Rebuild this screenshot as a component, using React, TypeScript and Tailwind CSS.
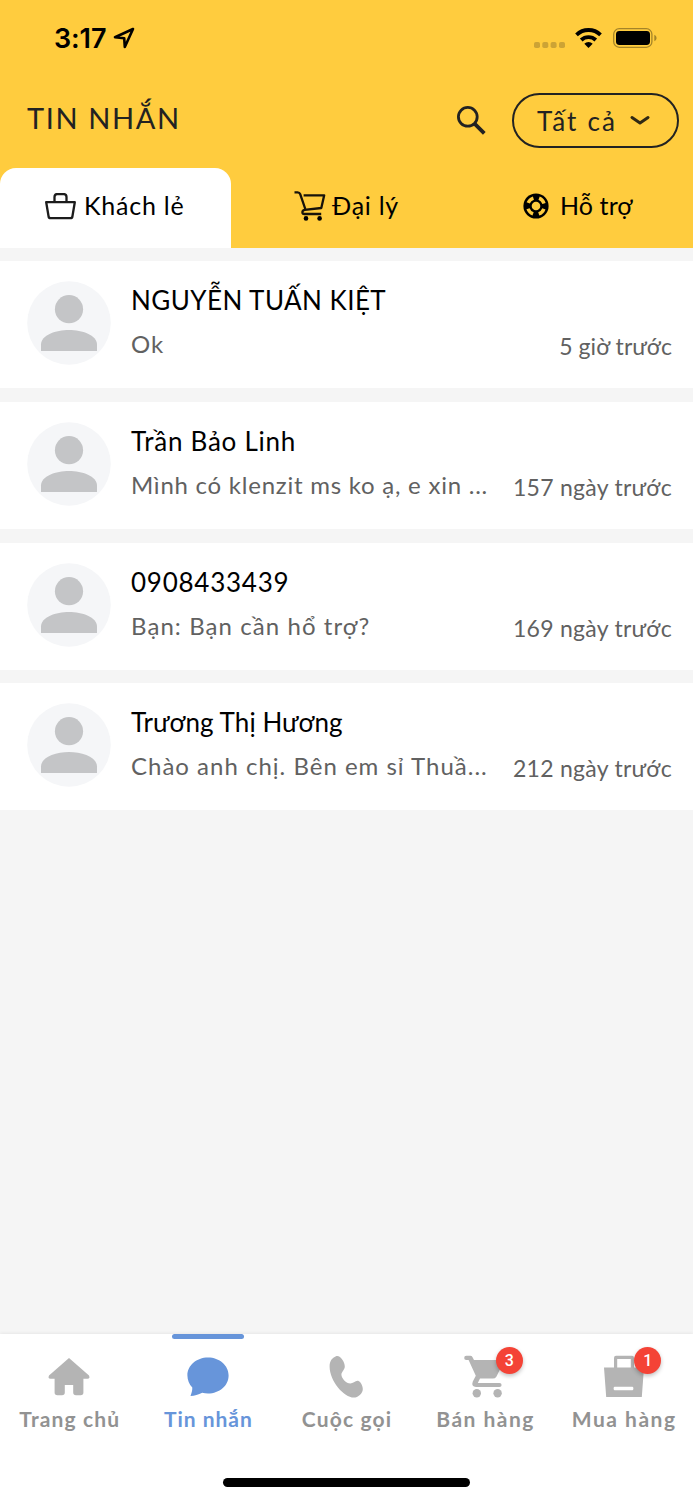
import React from "react";

const conversations = [
  { name: "NGUYỄN TUẤN KIỆT", message: "Ok", time: "5 giờ trước", nameCls: "tracking-[0.45px]", msgCls: "tracking-[1px]", timeCls: "tracking-[0.05px]" },
  { name: "Trần Bảo Linh", message: "Mình có klenzit ms ko ạ, e xin ...", time: "157 ngày trước", nameCls: "tracking-[0.75px]", msgCls: "tracking-[0.76px]", timeCls: "tracking-[0.28px]" },
  { name: "0908433439", message: "Bạn: Bạn cần hổ trợ?", time: "169 ngày trước", nameCls: "tracking-[0.75px]", msgCls: "tracking-[1.07px]", timeCls: "tracking-[0.28px]" },
  { name: "Trương Thị Hương", message: "Chào anh chị. Bên em sỉ Thuầ...", time: "212 ngày trước", nameCls: "tracking-[0.07px]", msgCls: "tracking-[1px]", timeCls: "tracking-[0.28px]" },
];

function StatusBar() {
  return (
    <div className="flex h-[76px] items-center pl-[54px] pr-[36px]">
      <span className="font-['Inter'] text-[27px] font-semibold leading-none tracking-[-0.1px] text-black">3:17</span>
      <svg className="ml-[7px]" width="22" height="22" viewBox="0 0 22 22" fill="none" stroke="#000" strokeWidth="2.6" strokeLinejoin="round">
        <path d="M20 2 L2 10.2 L11.2 11.2 L11.8 20 Z" />
      </svg>
      <div className="ml-auto flex items-center">
        <svg width="31" height="6" viewBox="0 0 31 6" className="mt-[13px]" fill="#cca335">
          <rect x="0" width="6" height="6" rx="1.8" />
          <rect x="8.3" width="6" height="6" rx="1.8" />
          <rect x="16.6" width="6" height="6" rx="1.8" />
          <rect x="25" width="6" height="6" rx="1.8" />
        </svg>
        <svg className="ml-[10px]" width="27" height="20" viewBox="0 0 27 20">
          <path d="M1.5 6.9 A17.2 17.2 0 0 1 25.5 6.9" fill="none" stroke="#000" strokeWidth="3.8" />
          <path d="M6.2 12 A10.6 10.6 0 0 1 20.8 12" fill="none" stroke="#000" strokeWidth="3.8" />
          <path d="M13.5 20 L9.3 15.8 A6 6 0 0 1 17.7 15.8 Z" />
        </svg>
        <svg className="ml-[11px]" width="44" height="20" viewBox="0 0 44 20">
          <rect x="0.7" y="0.7" width="38.2" height="18.6" rx="5.6" fill="none" stroke="#a58428" strokeWidth="1.3" />
          <rect x="3" y="3" width="34" height="14" rx="3.4" />
          <path d="M41.3 6.8 Q43.6 7.8 43.6 10 Q43.6 12.2 41.3 13.2 Z" fill="#a58428" />
        </svg>
      </div>
    </div>
  );
}

function BasketIcon() {
  return (
    <svg width="31" height="27" viewBox="0 0 31 27" fill="none" stroke="#1c1c1c" strokeWidth="2.3" strokeLinejoin="round">
      <path d="M1.2 9.2 H29.8 L27.4 23.5 Q27.2 25.2 25.4 25.2 H5.6 Q3.8 25.2 3.6 23.5 Z" />
      <path d="M9.5 9 V4 Q9.5 1.1 12.2 1.1 H18.8 Q21.5 1.1 21.5 4 V9" />
    </svg>
  );
}

function CartOutlineIcon() {
  return (
    <svg width="32" height="30" viewBox="0 0 32 30" fill="none" stroke="#17130a" strokeWidth="2.3" strokeLinejoin="round">
      <path d="M0.5 1.4 H3.6 Q5.6 1.4 6.2 3.2 L11.3 18" />
      <path d="M9.6 4.3 H30.2 L27.3 17 L10.6 18.8 Q8.4 19.4 8.4 21.3 Q8.4 23 10.4 23 H27.2" />
      <circle cx="12" cy="27.4" r="2.3" fill="#000" stroke="none" />
      <circle cx="25.6" cy="27.4" r="2.3" fill="#000" stroke="none" />
    </svg>
  );
}

function SupportIcon() {
  return (
    <svg width="26" height="26" viewBox="0 0 26 26">
      <circle cx="13" cy="13" r="12.6" />
      <circle cx="13" cy="13" r="8.4" fill="none" stroke="#ffcc3e" strokeWidth="3.4" strokeDasharray="7.4 5.795" strokeDashoffset="-2.9" />
      <circle cx="13" cy="13" r="4.3" fill="#ffcc3e" />
    </svg>
  );
}

function Header() {
  return (
    <header className="h-[248px] bg-[#ffcc3e]">
      <StatusBar />
      <div className="flex h-[92px] items-start pl-[27px] pr-[14px] pt-[17px]">
        <h1 className="pt-[5px] text-[29px] leading-[40px] tracking-[1.6px] text-[#222]">TIN NHẮN</h1>
        <svg className="ml-auto mr-[26px] mt-[13px]" width="29" height="29" viewBox="0 0 29 29" fill="none" stroke="#222">
          <circle cx="10.8" cy="10.8" r="9.4" strokeWidth="2.8" />
          <path d="M17.8 17.8 L27.3 27.3" strokeWidth="3.8" />
        </svg>
        <button className="flex h-[55px] w-[167px] items-center rounded-full border-2 border-[#222] pl-[23px] text-[26px] leading-[40px] tracking-[2.2px] text-[#222]">
          Tất cả
          <svg className="ml-[13px]" width="20" height="11" viewBox="0 0 20 11" fill="none" stroke="#302914" strokeWidth="3" strokeLinecap="round" strokeLinejoin="round">
            <path d="M2 2.5 L10 8 L18 2.5" />
          </svg>
        </button>
      </div>
      <nav className="grid h-[80px] grid-cols-3 text-[25px] leading-[36px] text-black">
        <div className="flex items-center rounded-t-[16px] bg-white pb-[4px] pl-[45px]">
          <BasketIcon />
          <span className="-mt-[2px] ml-[8px] tracking-[0.75px]">Khách lẻ</span>
        </div>
        <div className="flex items-center pb-[4px] pl-[63px]">
          <CartOutlineIcon />
          <span className="-mt-[2px] ml-[6px] tracking-[0.75px]">Đại lý</span>
        </div>
        <div className="flex items-center pb-[4px] pl-[61px]">
          <SupportIcon />
          <span className="-mt-[2px] ml-[11px] tracking-[0.1px]">Hỗ trợ</span>
        </div>
      </nav>
    </header>
  );
}

function Avatar() {
  return (
    <svg className="mt-[20px] shrink-0" width="84" height="84" viewBox="0 0 84 84">
      <circle cx="42" cy="42" r="41.8" fill="#f5f6f8" />
      <circle cx="42" cy="28.2" r="14.1" fill="#c4c5c7" />
      <path d="M14 70 V63.5 C14 54 29 49 42 49 C55 49 70 54 70 63.5 V70 Z" fill="#c4c5c7" />
    </svg>
  );
}

function NavItem({ label, active, badge, labelCls, children }: { label: string; active?: boolean; badge?: string; labelCls: string; children: React.ReactNode }) {
  return (
    <div className={active ? "relative flex flex-col items-center text-[#6795da]" : "relative flex flex-col items-center text-[#b4b4b4]"}>
      <div className={active ? "h-[5px] w-[72px] rounded-full bg-[#6795da]" : "h-[5px] w-[72px]"} />
      <svg className="mt-[16px]" width="44" height="44" viewBox="0 0 44 44" fill="currentColor">
        {children}
      </svg>
      <span className={`${labelCls} ${active ? "text-[#6795da]" : "text-[#929292]"} mt-[5px] whitespace-nowrap pl-[1px] text-[21px] font-bold leading-[30px]`}>{label}</span>
      {badge && (
        <span className="absolute left-[80px] top-[13px] flex size-[27px] items-center justify-center rounded-full bg-[#f44336] font-['Roboto'] text-[16px] font-medium text-white shadow-[0_2px_4px_rgba(0,0,0,0.25)]">
          {badge}
        </span>
      )}
    </div>
  );
}

export default function App() {
  return (
    <div className="flex h-[1500px] w-[693px] flex-col overflow-hidden bg-[#f5f5f5] font-['Lato',sans-serif]">
      <Header />
      <main className="flex flex-1 flex-col gap-[13.7px] pt-[13.2px]">
        {conversations.map((item) => (
          <div key={item.name} className="flex h-[127px] bg-white pl-[27px] pr-[21px]">
            <Avatar />
            <div className="ml-[20px] pt-[21px]">
              <h2 className={`${item.nameCls} whitespace-nowrap text-[26px] leading-[36px] text-black`}>{item.name}</h2>
              <p className={`${item.msgCls} mt-[8px] whitespace-nowrap text-[24px] leading-[36px] text-[#616161]`}>{item.message}</p>
            </div>
            <span className={`${item.timeCls} ml-auto whitespace-nowrap pt-[69px] text-[23px] leading-[32px] text-[#616161]`}>{item.time}</span>
          </div>
        ))}
      </main>
      <footer className="flex h-[166px] flex-col items-center bg-white shadow-[0_-1px_3px_rgba(0,0,0,0.06)]">
        <div className="grid w-full grid-cols-5">
          <NavItem label="Trang chủ" labelCls="tracking-[1.15px]">
            <path d="M22 3 L42 20.6 Q43.4 23.8 40.5 23.8 H36.4 V37.5 Q36.4 40.3 33.6 40.3 H29 Q26.2 40.3 26.2 37.5 V30 H17.8 V37.5 Q17.8 40.3 15 40.3 H10.4 Q7.6 40.3 7.6 37.5 V23.8 H3.5 Q0.6 23.8 2 20.6 Z" />
          </NavItem>
          <NavItem label="Tin nhắn" active labelCls="tracking-[1px]">
            <path d="M22 2.5 C33.5 2.5 42.6 10.5 42.6 20.4 C42.6 30.5 33.5 38.4 22 38.4 C20 38.4 18 38.2 16.2 37.8 C12.5 39.8 8.5 41 4.5 41 C5.6 38 6.4 35.5 6.3 32.5 C3.2 29.2 1.4 25 1.4 20.4 C1.4 10.5 10.5 2.5 22 2.5 Z" />
          </NavItem>
          <NavItem label="Cuộc gọi" labelCls="tracking-[1.15px]">
            <path d="M12 1.3 C16 -0.3 20.8 6.8 20.8 11.5 C20.8 14.8 17.4 17 17.4 19.5 C17.4 23.2 22.2 28.6 26.4 28.6 C29 28.6 32 24.9 34.6 26 C36.5 26.8 38.8 30.6 38.8 34 C38.8 38.5 34 42.6 29.8 42.6 C20 42.6 5.6 26 5.6 11.5 C5.6 6 8.2 2.8 12 1.3 Z" />
          </NavItem>
          <NavItem label="Bán hàng" badge="3" labelCls="tracking-[1.5px]">
            <path d="M3.2 0.8 H7.4 Q8.8 0.8 9.4 2 L11 5 H38 Q41.5 5 40 8.2 L33.5 21.4 Q32.2 23.6 29.8 23.6 H17 L14.8 27.9 H36.5 Q38.6 27.9 38.6 30 Q38.6 32 36.5 32 H13 Q8 31.5 9.8 26.5 L12.8 20.8 L5.6 5 H3.2 Q1.2 5 1.2 2.9 Q1.2 0.8 3.2 0.8 Z" />
            <circle cx="13.8" cy="38.2" r="4.2" />
            <circle cx="34.6" cy="38.2" r="4.2" />
          </NavItem>
          <NavItem label="Mua hàng" badge="1" labelCls="tracking-[1.5px]">
            <path fillRule="evenodd" d="M12 12.5 V3 Q12 0.8 14 0.8 H30 Q32 0.8 32 3 V12.5 H42 L39.8 42 H4.2 L2 12.5 Z M15.2 12.5 H28.8 V4 H15.2 Z M12.5 31.8 Q11.6 31.8 11.6 33.4 Q11.6 35.2 12.5 35.2 H30.5 Q31.4 35.2 31.4 33.4 Q31.4 31.8 30.5 31.8 Z" />
          </NavItem>
        </div>
        <div className="mb-[13px] mt-auto h-[9px] w-[247px] shrink-0 rounded-full bg-black" />
      </footer>
    </div>
  );
}
